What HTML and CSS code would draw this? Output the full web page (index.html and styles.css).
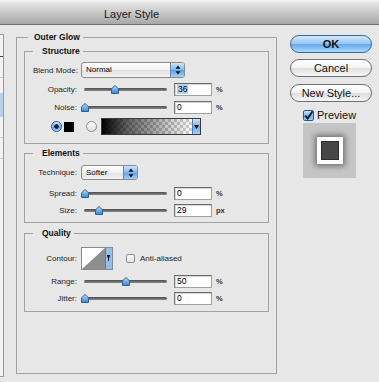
FILE: index.html
```html
<!DOCTYPE html>
<html lang="en">
<head>
  <meta charset="UTF-8" />
  <title>Layer Style</title>
  <link rel="stylesheet" href="styles.css">
</head>
<body>

  <div class="titlebar">Layer Style</div>

  <div class="dialog">
    <!-- cropped list of styles on the left -->
    <div class="stylelist">
      <div class="list-row"></div>
      <div class="list-row"></div>
      <div class="list-row active"></div>
      <div class="list-row"></div>
      <div class="list-row"></div>
    </div>

    <fieldset class="group outer">
      <legend>Outer Glow</legend>

      <fieldset class="group structure">
        <legend>Structure</legend>
        <div class="row row-select">
          <span class="label">Blend Mode:</span>
          <div class="select blend"><span class="select-text">Normal</span>
            <span class="stepper"><svg width="6" height="10" viewBox="0 0 6 10"><path d="M3 0.5 L5.5 3.8 H0.5 Z M3 9.5 L5.5 6.2 H0.5 Z" fill="#111"/></svg></span>
          </div>
        </div>
        <div class="row">
          <span class="label">Opacity:</span>
          <div class="slider"><span class="knob" style="left:30px"><svg width="8" height="9" viewBox="0 0 8 9"><defs><linearGradient id="kg" x1="0" y1="0" x2="0" y2="1"><stop offset="0" stop-color="#cfe6fb"/><stop offset="0.5" stop-color="#6fb0ec"/><stop offset="1" stop-color="#3c86d8"/></linearGradient></defs><path d="M4 0.5 L7.5 3.8 V8.5 H0.5 V3.8 Z" fill="url(#kg)" stroke="#2f5e98"/></svg></span></div>
          <div class="field"><span class="picked">36</span></div>
          <span class="unit">%</span>
        </div>
        <div class="row">
          <span class="label">Noise:</span>
          <div class="slider"><span class="knob" style="left:0px"><svg width="8" height="9" viewBox="0 0 8 9"><path d="M4 0.5 L7.5 3.8 V8.5 H0.5 V3.8 Z" fill="url(#kg)" stroke="#2f5e98"/></svg></span></div>
          <div class="field">0</div>
          <span class="unit">%</span>
        </div>
        <div class="row row-color">
          <span class="radio on"></span>
          <span class="swatch"></span>
          <span class="radio"></span>
          <div class="gradient-pick">
            <span class="gradient"></span>
            <span class="drop"><svg width="5" height="6" viewBox="0 0 5 6"><path d="M0 1 H5 L2.5 5 Z" fill="#111"/></svg></span>
          </div>
        </div>
      </fieldset>

      <fieldset class="group elements">
        <legend>Elements</legend>
        <div class="row row-tech">
          <span class="label">Technique:</span>
          <div class="select tech"><span class="select-text">Softer</span>
            <span class="stepper"><svg width="6" height="10" viewBox="0 0 6 10"><path d="M3 0.5 L5.5 3.8 H0.5 Z M3 9.5 L5.5 6.2 H0.5 Z" fill="#111"/></svg></span>
          </div>
        </div>
        <div class="row spaced">
          <span class="label">Spread:</span>
          <div class="slider"><span class="knob" style="left:0px"><svg width="8" height="9" viewBox="0 0 8 9"><path d="M4 0.5 L7.5 3.8 V8.5 H0.5 V3.8 Z" fill="url(#kg)" stroke="#2f5e98"/></svg></span></div>
          <div class="field">0</div>
          <span class="unit">%</span>
        </div>
        <div class="row">
          <span class="label">Size:</span>
          <div class="slider"><span class="knob" style="left:14px"><svg width="8" height="9" viewBox="0 0 8 9"><path d="M4 0.5 L7.5 3.8 V8.5 H0.5 V3.8 Z" fill="url(#kg)" stroke="#2f5e98"/></svg></span></div>
          <div class="field">29</div>
          <span class="unit">px</span>
        </div>
      </fieldset>

      <fieldset class="group quality">
        <legend>Quality</legend>
        <div class="row row-contour">
          <span class="label">Contour:</span>
          <div class="contour">
            <svg width="30" height="21" viewBox="0 0 30 21">
              <rect width="30" height="21" fill="#fff"/>
              <path d="M0 21 L23 0 V21 Z" fill="#8e8e8e"/>
              <rect x="23" width="7" height="21" fill="#8fc0ef"/>
              <rect x="23" width="1" height="21" fill="#4f7fb8"/>
              <path d="M24.8 7 H28.2 L27 10.5 V13 H26 V10.5 Z" fill="#111"/>
            </svg>
          </div>
          <span class="checkbox"></span>
          <span class="check-label">Anti-aliased</span>
        </div>
        <div class="row">
          <span class="label">Range:</span>
          <div class="slider"><span class="knob" style="left:41px"><svg width="8" height="9" viewBox="0 0 8 9"><path d="M4 0.5 L7.5 3.8 V8.5 H0.5 V3.8 Z" fill="url(#kg)" stroke="#2f5e98"/></svg></span></div>
          <div class="field">50</div>
          <span class="unit">%</span>
        </div>
        <div class="row">
          <span class="label">Jitter:</span>
          <div class="slider"><span class="knob" style="left:0px"><svg width="8" height="9" viewBox="0 0 8 9"><path d="M4 0.5 L7.5 3.8 V8.5 H0.5 V3.8 Z" fill="url(#kg)" stroke="#2f5e98"/></svg></span></div>
          <div class="field">0</div>
          <span class="unit">%</span>
        </div>
      </fieldset>
    </fieldset>

    <div class="actions">
      <button class="btn btn-default">OK</button>
      <button class="btn">Cancel</button>
      <button class="btn">New Style...</button>
      <div class="preview-toggle">
        <span class="checkbox checked"><svg width="11" height="11" viewBox="0 0 11 11"><path d="M2.2 5.6 L4.6 8.6 L9.6 1.2" fill="none" stroke="#10223a" stroke-width="2"/></svg></span>
        <span>Preview</span>
      </div>
      <div class="thumb">
        <div class="thumb-frame"><div class="thumb-fill"></div></div>
      </div>
    </div>
  </div>

</body>
</html>
```

FILE: styles.css
```css
body {
  margin: 0;
  width: 379px;
  height: 382px;
  overflow: hidden;
  background: #e7e7e7;
  font-family: 'Liberation Sans', Arial, sans-serif;
  font-size: 8px;
  color: #1e1e1e;
}

.titlebar {
  box-sizing: border-box;
  height: 25px;
  padding: 3px 0 0 104px;
  line-height: 22px;
  font-size: 11px;
  color: #1a1a1a;
  background: linear-gradient(#f6f6f6 0, #e2e2e2 15%, #a7a7a7 100%);
  border-bottom: 1px solid #6f6f6f;
}

.dialog {
  display: flex;
  align-items: flex-start;
}

/* list pane, mostly cut off */
.stylelist {
  width: 3px;
  height: 341px;
  margin-top: 9px;
  background: #f3f3f3;
  border: 1px solid #999;
  border-left: none;
}

.list-row {
  height: 20px;
  border-bottom: 1px solid #c9c9c9;
}

.list-row:first-child {
  height: 21px;
  border-bottom-color: #444;
}

.list-row.active {
  height: 23px;
  margin-top: 15px;
  background: #b9cfec;
  border-bottom-color: #b9cfec;
}

/* group boxes */
.group {
  margin: 0;
  border: 1px solid #a2a2a2;
  min-inline-size: 0;
}

.group legend {
  font-weight: bold;
  font-size: 8.5px;
  line-height: 10px;
  color: #111;
  padding: 0 3px 0 9px;
  margin-left: 0;
}

.outer {
  box-sizing: border-box;
  width: 261px;
  margin: 7px 0 0 12px;
  padding: 4px 7px 61px 7px;
}

.outer > legend {
  margin-left: 4px;
  padding: 0 3px 0 6px;
}

.outer .group {
  padding: 0 8px;
}

.structure {
  padding-top: 6px !important;
  padding-bottom: 8px !important;
}

.elements {
  margin-top: 4px;
  padding-top: 7px !important;
  padding-bottom: 5px !important;
}

.quality {
  margin-top: 5px;
  padding-top: 9px !important;
  padding-bottom: 6px !important;
}

/* rows */
.row {
  display: flex;
  align-items: center;
  height: 13px;
  margin-top: 5px;
}

.row:first-of-type {
  margin-top: 0;
}

.quality .row + .row + .row,
.elements .row + .row + .row,
.structure .row-color {
  margin-top: 4px;
}

.elements .spaced {
  margin-top: 7px;
}

.row-select { height: 16px; }
.row-tech { height: 15px; }
.row-contour { height: 23px; }
.row-color { height: 17px; padding-left: 18px; }

.label {
  flex: none;
  width: 44px;
  margin-right: 4px;
  text-align: right;
  white-space: nowrap;
}

/* popup menus */
.select {
  box-sizing: border-box;
  display: flex;
  height: 100%;
  border: 1px solid #8a8a8a;
  border-radius: 3px;
  background: linear-gradient(#ffffff, #f1f1f1 50%, #e2e2e2 51%, #f3f3f3);
  overflow: hidden;
}

.blend { width: 104px; }
.tech { width: 57px; }

.select-text {
  flex: 1;
  padding-left: 4px;
  line-height: 14px;
  color: #000;
}

.tech .select-text { line-height: 13px; }

.stepper {
  width: 13px;
  display: flex;
  align-items: center;
  justify-content: center;
  border-left: 1px solid #5e88bd;
  background: linear-gradient(#cde4fa, #7db8ee 50%, #5aa0e6 51%, #a5d1f8);
}

/* sliders */
.slider {
  position: relative;
  flex: none;
  width: 87px;
  height: 13px;
}

.slider::before {
  content: "";
  position: absolute;
  left: 3px;
  right: 1px;
  top: 5px;
  height: 3px;
  border-radius: 2px;
  background: linear-gradient(#4c4c4c, #8a8a8a);
}

.knob {
  position: absolute;
  top: 2px;
  width: 8px;
  height: 9px;
}

.knob svg { display: block; }

.field {
  box-sizing: border-box;
  flex: none;
  width: 38px;
  height: 13px;
  margin-left: 6px;
  padding-left: 2px;
  background: #fff;
  border: 1px solid #a0a0a0;
  border-top-color: #6c6c6c;
  border-left-color: #7c7c7c;
  box-shadow: inset 1px 1px 0 #d6d6d6;
  font-size: 8.5px;
  line-height: 11px;
  color: #000;
}

.picked {
  background: #b4d2f4;
  padding: 0 1px;
}

.unit {
  margin-left: 4px;
  font-size: 7.5px;
  font-weight: bold;
  color: #333;
}

/* colour choice */
.radio {
  box-sizing: border-box;
  width: 11px;
  height: 11px;
  border-radius: 50%;
  border: 1px solid #8c8c8c;
  background: linear-gradient(#fdfdfd, #e0e0e0);
}

.radio.on {
  position: relative;
  border-color: #2f5a8f;
  background: radial-gradient(circle, #10243f 0 2px, transparent 2.5px),
    linear-gradient(#cfe5fb, #6fb0ec 55%, #9fcdf7);
}

.swatch {
  width: 10px;
  height: 10px;
  margin: 0 12px 0 2px;
  background: #000;
}

.gradient-pick {
  box-sizing: border-box;
  display: flex;
  width: 100px;
  height: 17px;
  margin-left: 4px;
  border: 1px solid #3a3a3a;
}

.gradient {
  flex: 1;
  background: linear-gradient(to right, #000 0, rgba(0, 0, 0, 0.6) 30%, rgba(0, 0, 0, 0) 100%),
    conic-gradient(#fff 25%, #cfcfcf 0 50%, #fff 0 75%, #cfcfcf 0) 0 0 / 6px 6px;
}

.drop {
  width: 7px;
  display: flex;
  align-items: center;
  justify-content: center;
  border-left: 1px solid #4f7fb8;
  background: linear-gradient(#cde4fa, #6caeec 55%, #a5d1f8);
}

/* contour */
.contour {
  box-sizing: border-box;
  width: 32px;
  height: 23px;
  border: 1px solid #8a8a8a;
}

.contour svg { display: block; }

.checkbox {
  box-sizing: border-box;
  width: 9px;
  height: 9px;
  margin-left: 13px;
  border: 1px solid #8f8f8f;
  border-radius: 2px;
  background: linear-gradient(#fdfdfd, #e3e3e3);
}

.check-label {
  margin-left: 5px;
}

/* right column */
.actions {
  width: 82px;
  margin: 10px 0 0 13px;
  display: flex;
  flex-direction: column;
}

.btn {
  box-sizing: border-box;
  height: 18px;
  margin: 0 0 6px;
  padding: 0;
  border: 1px solid #6f6f6f;
  border-radius: 9px;
  background: linear-gradient(#ffffff, #f3f3f3 50%, #dedede 51%, #f7f7f7);
  font-family: 'Liberation Sans', Arial, sans-serif;
  font-size: 11px;
  line-height: 15px;
  color: #111;
}

.btn + .btn + .btn {
  margin-top: 1px;
}

.btn-default {
  border-color: #3b67a0;
  background: linear-gradient(#d4e8fb, #93c5f2 50%, #63a8ea 51%, #acd8fc);
  font-weight: bold;
}

.preview-toggle {
  display: flex;
  align-items: center;
  height: 12px;
  margin: 1px 0 0 13px;
  font-size: 11px;
  color: #111;
}

.preview-toggle .checkbox {
  width: 11px;
  height: 11px;
  margin: 0 3px 0 0;
  border-color: #30598d;
  background: linear-gradient(#cfe5fb, #6fb0ec 55%, #9fcdf7);
}

.preview-toggle svg {
  display: block;
  margin: -1px 0 0 -1px;
}

.thumb {
  width: 53px;
  height: 55px;
  margin: 2px 0 0 13px;
  display: flex;
  align-items: center;
  justify-content: center;
  background: #c5c5c5;
}

.thumb-frame {
  box-sizing: border-box;
  width: 26px;
  height: 27px;
  padding: 4px;
  background: #fff;
  box-shadow: 0 0 6px 2px rgba(0, 0, 0, 0.45);
}

.thumb-fill {
  height: 100%;
  box-sizing: border-box;
  background: #474747;
  border: 1px solid #2c2c2c;
}
```
